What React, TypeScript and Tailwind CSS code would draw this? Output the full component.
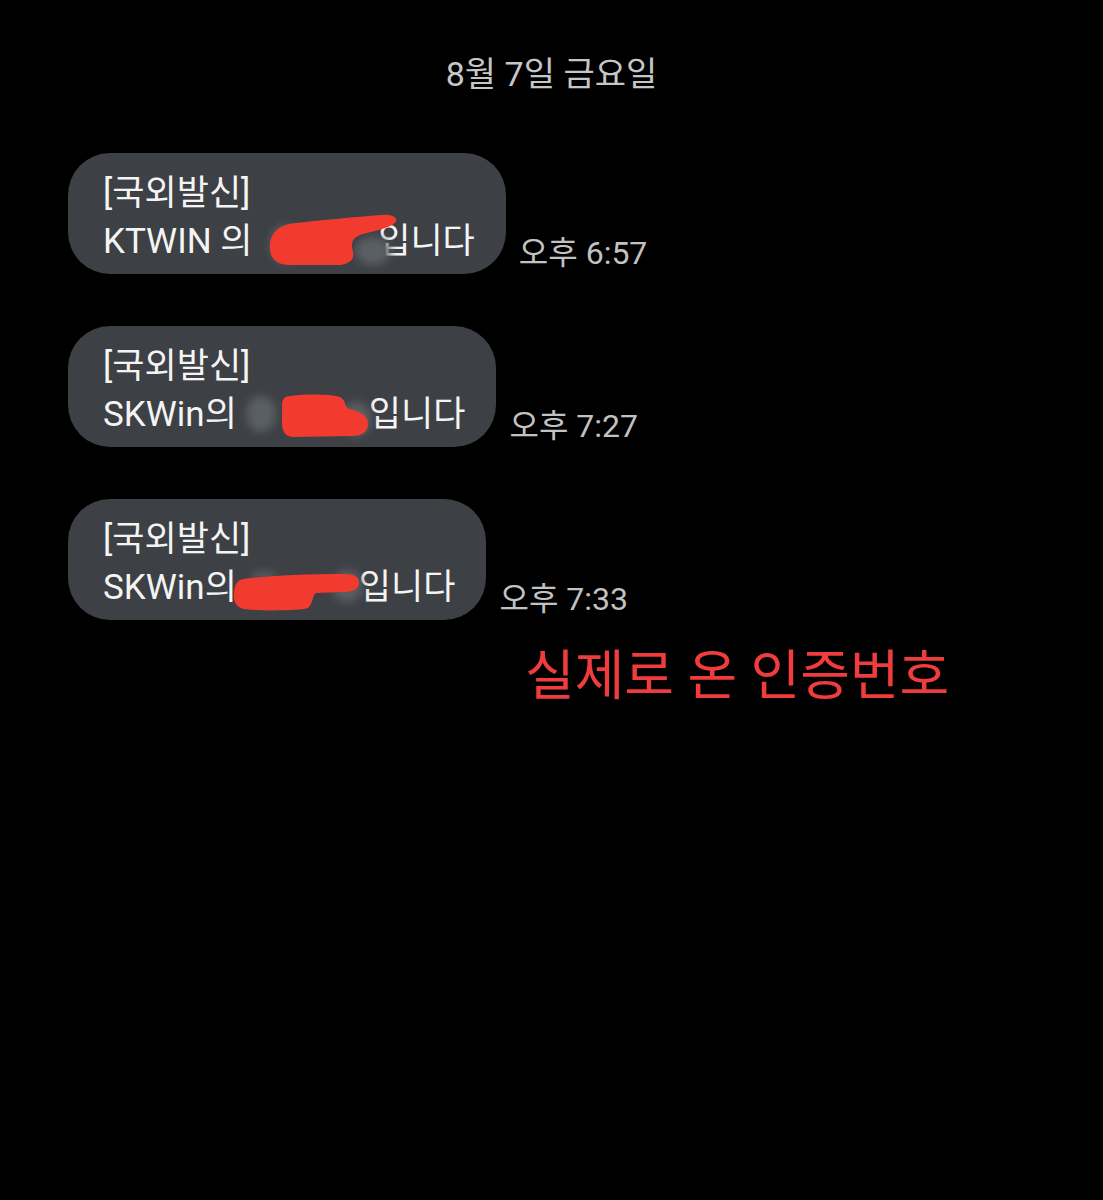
import React from "react";

const FONT = { fontFamily: 'Roboto, "Noto Sans CJK KR", "Noto Sans", sans-serif' };

function Blur({ id }: { id: string }) {
  return (
    <defs>
      <filter id={id} x="-50%" y="-50%" width="200%" height="200%">
        <feGaussianBlur stdDeviation="4" />
      </filter>
    </defs>
  );
}

function Bubble({
  prefix,
  spacer,
  time,
  children,
}: {
  prefix: string;
  spacer: string;
  time: string;
  children: React.ReactNode;
}) {
  return (
    <div className="flex items-end gap-[13px]">
      <div className="rounded-[42px] bg-[#3d4044] pl-[35px] pr-[31px] pt-[17px] pb-[8px] text-[35px] leading-[48px] text-[#f4f4f4] whitespace-nowrap">
        <div>[국외발신]</div>
        <div>
          <span>{prefix}</span>
          <span className={`relative inline-block h-[48px] align-top ${spacer}`}>{children}</span>
          <span>입니다</span>
        </div>
      </div>
      <div className="mb-[1px] text-[32px] leading-[40px] text-[#c2c2c2] whitespace-nowrap">{time}</div>
    </div>
  );
}

export default function App() {
  return (
    <div className="min-h-[1200px] w-full bg-black" style={FONT}>
      <div className="pt-[52px] text-center text-[34px] leading-[44px] text-[#c6c6c6]">8월 7일 금요일</div>
      <div className="mt-[57px] flex flex-col gap-[52px] pl-[68px]">
        <Bubble prefix="KTWIN 의 " spacer="w-[117px]" time="오후 6:57">
          <svg className="pointer-events-none absolute left-0 top-0 overflow-visible" width="200" height="48">
            <Blur id="b1" />
            <g transform="translate(-160 0)">
              <ellipse cx="184" cy="26" rx="15" ry="19" fill="#5a5e63" filter="url(#b1)" />
              <ellipse cx="272" cy="33" rx="18" ry="14" fill="#5a5e63" filter="url(#b1)" />
              <path
                d="M169 30 C168 14 180 6 195 5 C220 2 255 -1 280 -3 C292 -4 298 0 294 5 C290 9 275 13 262 16 C252 19 249 24 252 34 C254 43 246 47 235 47 L190 47 C176 47 169 41 169 30 Z"
                fill="#f23b2f"
              />
            </g>
          </svg>
        </Bubble>
        <Bubble prefix="SKWin의" spacer="w-[132px]" time="오후 7:27">
          <svg className="pointer-events-none absolute left-0 top-0 overflow-visible" width="200" height="48">
            <Blur id="b2" />
            <g transform="translate(-133 0)">
              <ellipse cx="157" cy="23" rx="15" ry="18" fill="#5a5e63" filter="url(#b2)" />
              <ellipse cx="252" cy="28" rx="15" ry="17" fill="#5a5e63" filter="url(#b2)" />
              <path
                d="M186 5 C205 3 225 3 236 6 C242 9 240 15 245 18 C255 20 264 24 264 33 C264 41 258 45 248 45 L190 46 C181 46 178 40 178 32 L178 14 C178 8 181 5 186 5 Z"
                fill="#f23b2f"
              />
            </g>
          </svg>
        </Bubble>
        <Bubble prefix="SKWin의" spacer="w-[122px]" time="오후 7:33">
          <svg className="pointer-events-none absolute left-0 top-0 overflow-visible" width="200" height="48">
            <Blur id="b3" />
            <g transform="translate(-133 0)">
              <ellipse cx="243" cy="22" rx="15" ry="16" fill="#5a5e63" filter="url(#b3)" />
              <ellipse cx="160" cy="12" rx="12" ry="5" fill="#5a5e63" filter="url(#b3)" />
              <path
                d="M140 15 C160 12 200 10 240 10 C252 10 256 14 255 20 C254 26 248 28 238 28 L212 29 C208 32 209 40 204 44 C198 47 150 47 140 45 C131 43 129 36 130 28 C131 20 133 16 140 15 Z"
                fill="#f23b2f"
              />
            </g>
          </svg>
        </Bubble>
      </div>
      <div className="mt-[27px] pl-[525px] text-[54px] leading-[60px] text-[#f03c3c] whitespace-nowrap">실제로 온 인증번호</div>
    </div>
  );
}
